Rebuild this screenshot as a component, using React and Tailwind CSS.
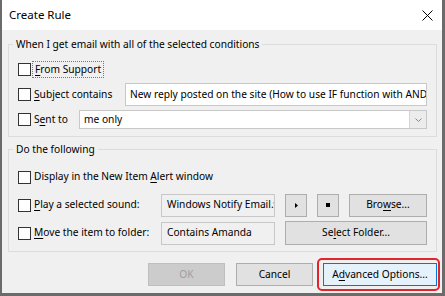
import React from "react";

const font = { fontFamily: '"Noto Sans", "Segoe UI", sans-serif' };

const Key = ({ children }) => <span className="underline underline-offset-2">{children}</span>;

const Check = () => (
  <span className="inline-block w-[13px] h-[13px] shrink-0 border border-[#333] bg-white" />
);

const Btn = ({ children, className = "" }) => (
  <button
    className={`h-[23px] shrink-0 flex items-center justify-center border border-[#adadad] bg-[#e1e1e1] text-black ${className}`}
  >
    {children}
  </button>
);

const Box = ({ children, className = "" }) => (
  <div
    className={`h-[23px] shrink-0 flex items-center px-[5px] border border-[#c8c8c8] bg-[#f0f0f0] whitespace-nowrap overflow-hidden ${className}`}
  >
    {children}
  </div>
);

const App = () => {
  return (
    <div
      className="w-[445px] h-[296px] overflow-hidden bg-[#6b6b6b] pl-[2px] pr-[3px] pb-[3px] text-black text-[10.2px]"
      style={font}
    >
      <div className="h-full flex flex-col bg-[#f0f0f0]">
        {/* title bar */}
        <div className="h-[30px] shrink-0 bg-white flex items-center justify-between pl-[7px] pr-[7px]">
          <span className="text-[11.5px]">Create Rule</span>
          <svg width="11" height="11" viewBox="0 0 11 11" className="mr-[2px]">
            <path d="M0.5 0.5 L10.5 10.5 M10.5 0.5 L0.5 10.5" stroke="#000" strokeWidth="1" />
          </svg>
        </div>

        <div className="flex flex-col min-w-0 pl-[6px] pr-[5px] pt-[6px]">
          {/* conditions */}
          <fieldset className="min-w-0 border border-[#dcdcdc] pl-[9px] pr-[9px] pb-[4px]">
            <legend className="leading-[16px] px-[3px] -ml-[5px]">
              When I get email with all of the selected conditions
            </legend>
            <div className="flex flex-col pt-[5px]">
              <div className="h-[25px] flex items-center gap-[1px]">
                <Check />
                <span className="px-[2px] leading-[15px] border border-dotted border-[#777]">
                  <Key>F</Key>rom Support
                </span>
              </div>
              <div className="h-[25px] flex items-center">
                <Check />
                <span className="ml-[3px] w-[91px] shrink-0 whitespace-nowrap">
                  <Key>S</Key>ubject contains
                </span>
                <div className="flex-1 min-w-0 h-[23px] flex items-center px-[4px] border border-[#c8c8c8] bg-white whitespace-nowrap overflow-hidden">
                  New reply posted on the site (How to use IF function with AND
                </div>
              </div>
              <div className="h-[25px] flex items-center">
                <Check />
                <span className="ml-[3px] w-[45px] shrink-0">
                  S<Key>e</Key>nt to
                </span>
                <div className="flex-1 min-w-0 h-[19px] flex items-center justify-between border border-[#c8c8c8] bg-white">
                  <span className="pl-[4px]">me only</span>
                  <div className="w-[17px] h-full flex items-center justify-center border-l border-[#d4d4d4] bg-[#ececec]">
                    <svg width="7" height="4" viewBox="0 0 7 4">
                      <path d="M0.5 0.5 L3.5 3.5 L6.5 0.5" fill="none" stroke="#888" strokeWidth="1" />
                    </svg>
                  </div>
                </div>
              </div>
            </div>
          </fieldset>

          {/* actions */}
          <fieldset className="min-w-0 mt-[4px] border border-[#dcdcdc] pl-[9px] pr-[9px] pb-[4px]">
            <legend className="leading-[16px] px-[3px] -ml-[5px]">Do the following</legend>
            <div className="flex flex-col pt-[6px]">
              <div className="h-[28px] flex items-center">
                <Check />
                <span className="ml-[3px]">
                  Display in the New Item <Key>A</Key>lert window
                </span>
              </div>
              <div className="h-[28px] flex items-center">
                <Check />
                <span className="ml-[3px] w-[127px] shrink-0 whitespace-nowrap">
                  <Key>P</Key>lay a selected sound:
                </span>
                <Box className="w-[114px]">Windows Notify Email.wav</Box>
                <Btn className="ml-[10px] w-[22px]">
                  <svg width="3" height="5" viewBox="0 0 3 5">
                    <path d="M0 0 L3 2.5 L0 5 Z" fill="#000" />
                  </svg>
                </Btn>
                <Btn className="ml-[10px] w-[22px]">
                  <span className="w-[4px] h-[4px] bg-black" />
                </Btn>
                <Btn className="ml-[10px] flex-1 min-w-0">
                  Bro<Key>w</Key>se...
                </Btn>
              </div>
              <div className="h-[28px] flex items-center">
                <Check />
                <span className="ml-[3px] w-[127px] shrink-0 whitespace-nowrap">
                  <Key>M</Key>ove the item to folder:
                </span>
                <Box className="w-[114px]">Contains Amanda</Box>
                <Btn className="ml-[10px] flex-1 min-w-0 h-[24px]">
                  Se<Key>l</Key>ect Folder...
                </Btn>
              </div>
            </div>
          </fieldset>

          {/* footer buttons */}
          <div className="mt-[11px] flex justify-end">
            <button className="w-[77px] h-[23px] border border-[#bfbfbf] bg-[#cccccc] text-[#a0a0a0]">
              OK
            </button>
            <Btn className="ml-[11px] w-[77px]">Cancel</Btn>
            <div className="relative ml-[10px]">
              <button className="w-[114px] h-[23px] whitespace-nowrap border border-[#0078d7] bg-[#e5f1fb] text-black">
                A<Key>d</Key>vanced Options...
              </button>
              <span className="absolute -left-[6px] -right-[3px] -top-[5px] -bottom-[5px] border-2 border-[#e3242b] rounded-[5px] pointer-events-none" />
            </div>
          </div>
        </div>
      </div>
    </div>
  );
};

export default App;
